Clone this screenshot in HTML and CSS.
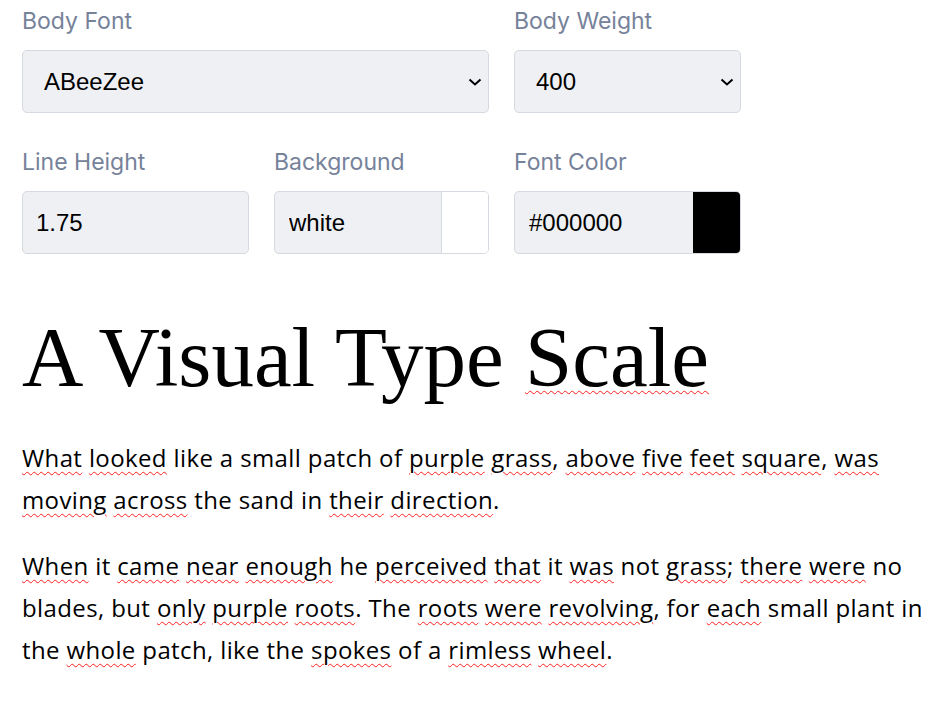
FILE: index.html
```html
<!DOCTYPE html>
<html lang="en">
<head>
<meta charset="utf-8">
<title>A Visual Type Scale</title>
<link rel="stylesheet" href="styles.css">
</head>
<body>
<main class="page">
  <section class="controls">
    <div class="field span-2">
      <label class="label" for="bodyFont">Body Font</label>
      <div class="select-wrap">
        <select id="bodyFont" class="box select"><option>ABeeZee</option></select>
        <svg class="chevron" width="14" height="8" viewBox="0 0 14 8" aria-hidden="true"><path d="M1.5 1.5 L7 6.5 L12.5 1.5" fill="none" stroke="#000" stroke-width="2"/></svg>
      </div>
    </div>
    <div class="field">
      <label class="label" for="bodyWeight">Body Weight</label>
      <div class="select-wrap">
        <select id="bodyWeight" class="box select"><option>400</option></select>
        <svg class="chevron" width="14" height="8" viewBox="0 0 14 8" aria-hidden="true"><path d="M1.5 1.5 L7 6.5 L12.5 1.5" fill="none" stroke="#000" stroke-width="2"/></svg>
      </div>
    </div>
    <div class="field">
      <label class="label" for="lineHeight">Line Height</label>
      <input id="lineHeight" class="box input" type="text" value="1.75">
    </div>
    <div class="field">
      <label class="label" for="bg">Background</label>
      <div class="box combo">
        <input id="bg" class="combo-text" type="text" value="white">
        <span class="swatch swatch-white"></span>
      </div>
    </div>
    <div class="field">
      <label class="label" for="fc">Font Color</label>
      <div class="box combo">
        <input id="fc" class="combo-text" type="text" value="#000000">
        <span class="swatch swatch-black"></span>
      </div>
    </div>
  </section>

  <h1 class="title">A Visual Type <span class="sp">Scale</span></h1>

  <p class="text"><span class="sp">What</span> <span class="sp">looked</span> like a small patch of <span class="sp">purple</span> <span class="sp">grass</span>, <span class="sp">above</span> <span class="sp">five</span> <span class="sp">feet</span> <span class="sp">square</span>, <span class="sp">was</span><br><span class="sp">moving</span> <span class="sp">across</span> the sand in <span class="sp">their</span> <span class="sp">direction</span>.</p>

  <p class="text"><span class="sp">When</span> it <span class="sp">came</span> <span class="sp">near</span> <span class="sp">enough</span> he <span class="sp">perceived</span> <span class="sp">that</span> it <span class="sp">was</span> not <span class="sp">grass</span>; <span class="sp">there</span> <span class="sp">were</span> no<br>blades, but <span class="sp">only</span> <span class="sp">purple</span> <span class="sp">roots</span>. The <span class="sp">roots</span> <span class="sp">were</span> <span class="sp">revolving</span>, for <span class="sp">each</span> small plant in<br>the <span class="sp">whole</span> patch, like the <span class="sp">spokes</span> of a <span class="sp">rimless</span> <span class="sp">wheel</span>.</p>
</main>
</body>
</html>
```
FILE: styles.css
```css
html, body {
  margin: 0;
  padding: 0;
  background: #ffffff;
}

.page {
  padding: 5px 20px 0 22px;
}

.controls {
  display: grid;
  grid-template-columns: 227px 215px 227px;
  column-gap: 25px;
  row-gap: 33px;
}

.field {
  display: flex;
  flex-direction: column;
  gap: 12px;
}

.span-2 {
  grid-column: span 2;
}

.label {
  font-family: "Inter", "Open Sans", sans-serif;
  font-size: 23px;
  line-height: 33px;
  color: #76829a;
}

.box {
  box-sizing: border-box;
  height: 63px;
  margin: 0;
  border: 1px solid #d5d9e0;
  border-radius: 5px;
  background: #eef0f4;
  font-family: "Liberation Sans", Arial, sans-serif;
  font-size: 24px;
  color: #000000;
}

.select-wrap {
  position: relative;
}

.select {
  display: block;
  width: 100%;
  appearance: none;
  -webkit-appearance: none;
  padding: 0 30px 0 21px;
  outline: none;
}

.chevron {
  position: absolute;
  right: 7px;
  top: 28px;
  pointer-events: none;
}

.input {
  padding: 0 13px;
  outline: none;
}

.combo {
  display: flex;
  overflow: hidden;
}

.combo-text {
  flex: 1;
  min-width: 0;
  border: 0;
  margin: 0;
  padding: 0 14px;
  background: transparent;
  font: inherit;
  color: inherit;
  outline: none;
}

.swatch {
  width: 46px;
  flex: none;
  border-left: 1px solid #d5d9e0;
}

.swatch-white {
  background: #ffffff;
}

.swatch-black {
  background: #000000;
  border-left-color: #000000;
}

.title {
  margin: 52px 0 29px;
  font-family: "Liberation Serif", "Times New Roman", serif;
  font-weight: 400;
  font-size: 85px;
  line-height: 102px;
  color: #000000;
}

.text {
  margin: 0 0 24px;
  font-family: "Open Sans", sans-serif;
  font-size: 24px;
  letter-spacing: 0.38px;
  line-height: 42px;
  color: #000000;
  white-space: nowrap;
}

.sp {
  text-decoration: underline wavy #ff2020;
  text-decoration-thickness: 1px;
  text-underline-offset: 4px;
}
```
